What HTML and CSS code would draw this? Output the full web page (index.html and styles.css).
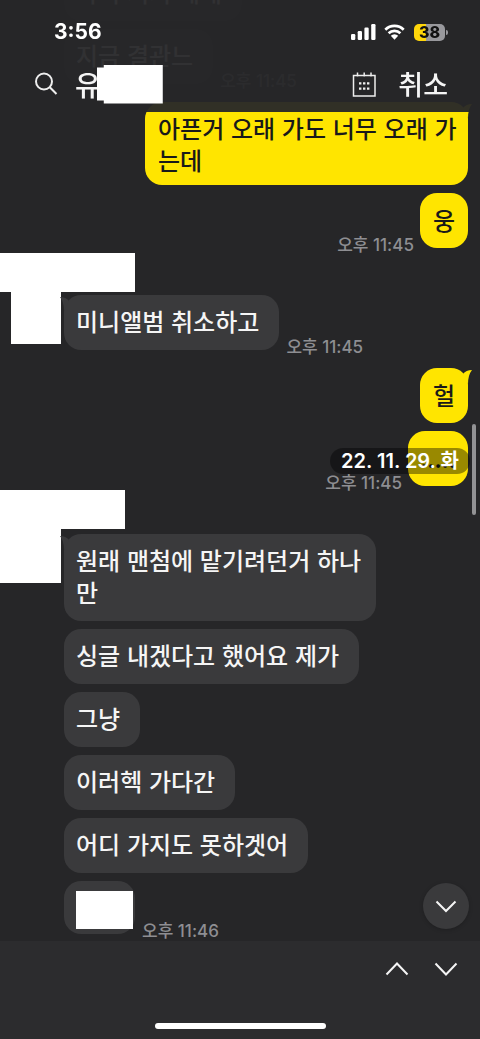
FILE: index.html
```html
<!DOCTYPE html>
<html lang="ko">
<head>
<meta charset="utf-8">
<meta name="viewport" content="width=device-width, initial-scale=1">
<title>채팅 검색</title>
<link rel="stylesheet" href="styles.css">
</head>
<body>
<header class="top">
  <div class="status">
    <span class="clock">3:56</span>
    <div class="status-icons">
      <svg class="signal" viewBox="0 0 25 16" aria-hidden="true"><rect x="0" y="10" width="4.300" height="6" rx="1.200"/><rect x="6.700" y="7" width="4.300" height="9" rx="1.200"/><rect x="13.400" y="3.500" width="4.300" height="12.500" rx="1.200"/><rect x="20.200" y="0" width="4.300" height="16" rx="1.200"/></svg>
      <svg class="wifi" viewBox="0 0 21 16" aria-hidden="true"><path d="M1.300 5.700a13.200 13.200 0 0 1 18.400 0M4.600 9.200a8.500 8.500 0 0 1 11.800 0" fill="none" stroke="#fff" stroke-width="2.700"/><path d="M6.800 11.800a5.300 5.300 0 0 1 7.400 0L10.500 15.700z"/></svg>
      <span class="battery"><span class="battery-level">38</span></span>
    </div>
  </div>
  <div class="search">
    <svg class="search-icon" viewBox="0 0 24 24" aria-hidden="true"><circle cx="10" cy="9.500" r="8"/><path d="M15.800 15.300 22.500 22"/></svg>
    <span class="query">유</span><span class="query-mask"></span>
    <button class="calendar" aria-label="날짜 선택">
      <svg viewBox="0 0 24 26" aria-hidden="true"><path d="M1.500 4.500h21.500v20.500h-21.500zM5.500 1.500v4M12.200 1.500v4M19 1.500v4" fill="none" stroke="#eee" stroke-width="1.500"/><path d="M7 11.200h2.400v2.400H7zM11 11.200h2.400v2.400H11zM15 11.200h2.400v2.400H15zM7 16.400h2.400v2.400H7zM11 16.400h2.400v2.400H11zM15 16.400h2.400v2.400H15z" fill="#eee"/></svg>
    </button>
    <button class="cancel">취소</button>
  </div>
</header>

<main class="chat">
  <div class="row in early"><p class="bubble">아니 거기 제게</p></div>
  <div class="row in"><p class="bubble">지금 결관느</p><time>오후 11:45</time></div>
  <div class="row out long"><p class="bubble tail">아픈거 오래 가도 너무 오래 가는데</p></div>
  <div class="row out"><time>오후 11:45</time><p class="bubble">웅</p></div>

  <section class="group">
    <div class="name"></div>
    <div class="avatar"></div>
    <div class="messages">
      <div class="row"><p class="bubble tail">미니앨범 취소하고</p><time>오후 11:45</time></div>
    </div>
  </section>

  <div class="row out after"><p class="bubble tail">헐</p></div>
  <div class="row out"><time>오후 11:45</time><p class="bubble dots">.....</p></div>

  <section class="group second">
    <div class="name"></div>
    <div class="avatar"></div>
    <div class="messages">
      <div class="row"><p class="bubble tail wrap">원래 맨첨에 맡기려던거 하나만</p></div>
      <div class="row"><p class="bubble">싱글 내겠다고 했어요 제가</p></div>
      <div class="row"><p class="bubble">그냥</p></div>
      <div class="row"><p class="bubble">이러헥 가다간</p></div>
      <div class="row"><p class="bubble">어디 가지도 못하겟어</p></div>
      <div class="row"><p class="bubble masked"><span class="mask"></span></p><time>오후 11:46</time></div>
    </div>
  </section>

  <span class="date">22. 11. 29. 화</span>
  <span class="scrollbar"></span>
  <button class="to-bottom" aria-label="맨 아래로"><svg viewBox="0 0 24 14" aria-hidden="true"><path d="M2.500 2.500 12 12 21.500 2.500"/></svg></button>
</main>

<footer class="bottom">
  <nav class="steps">
    <button aria-label="이전 결과"><svg viewBox="0 0 24 14" aria-hidden="true"><path d="M1.500 12.500 12 1.500 22.500 12.500"/></svg></button>
    <button aria-label="다음 결과"><svg viewBox="0 0 24 14" aria-hidden="true"><path d="M1.500 1.500 12 12.500 22.500 1.500"/></svg></button>
  </nav>
  <div class="home"></div>
</footer>
</body>
</html>
```
FILE: styles.css
```css
* { box-sizing: border-box; }
body {
  margin: 0;
  min-height: 100vh;
  display: flex;
  flex-direction: column;
  background: #262628;
  color: #f5f5f5;
  font-family: Inter, "Noto Sans CJK KR", sans-serif;
  overflow-x: hidden;
}
button {
  padding: 0;
  border: 0;
  background: none;
  color: inherit;
  font: inherit;
  display: flex;
  align-items: center;
  justify-content: center;
}
p { margin: 0; }

/* Header over the message list */
.top {
  position: fixed;
  z-index: 2;
  top: 0;
  left: 0;
  right: 0;
  height: 112px;
  background: rgba(38, 38, 40, 0.95);
}
.status {
  display: flex;
  justify-content: space-between;
  align-items: center;
  padding: 20px 35px 0 54px;
  height: 44px;
}
.clock { font-size: 21px; line-height: 24px; font-weight: 700; color: #fff; }
.status-icons { display: flex; align-items: center; gap: 8px; fill: #fff; }
.signal { width: 25px; height: 16px; }
.wifi { width: 21px; height: 16px; }
.battery {
  position: relative;
  width: 31px;
  height: 17px;
  margin-left: 1px;
  border-radius: 5px;
  background: linear-gradient(90deg, #ffd60a 38%, #98989c 38%);
  display: flex;
  align-items: center;
  justify-content: center;
}
.battery::after {
  content: "";
  position: absolute;
  right: -3px;
  top: 6px;
  width: 2px;
  height: 5px;
  border-radius: 0 2px 2px 0;
  background: #98989c;
}
.battery-level { font-size: 16px; line-height: 17px; font-weight: 800; color: #111; }
.search {
  display: flex;
  align-items: center;
  height: 80px;
  padding: 0 32px 0 34px;
  font-family: "Noto Sans CJK KR", sans-serif;
  font-weight: 500;
}
.search-icon { width: 24px; height: 24px; fill: none; stroke: #eee; stroke-width: 2; }
.query { margin-left: 17px; font-size: 28px; line-height: 36px; }
.query-mask {
  width: 66px;
  height: 39px;
  margin-left: -4px;
  background: #fff;
  clip-path: polygon(0 3px, 7px 3px, 7px 0, 100% 0, 100% 100%, 7px 100%, 7px 36px, 0 36px);
}
.calendar { width: 24px; height: 26px; margin-left: auto; }
.calendar svg { width: 24px; height: 26px; }
.cancel { margin-left: 22px; font-size: 27px; line-height: 36px; }

/* Messages */
.chat {
  position: relative;
  flex: 1;
  display: flex;
  flex-direction: column;
  gap: 8px;
  padding: 0 12px 5px 0;
}
.row { display: flex; align-items: flex-end; gap: 7px; }
.in { padding-left: 64px; }
.early { margin-top: -34px; }
.out { justify-content: flex-end; gap: 6px; }
.bubble {
  position: relative;
  min-height: 55px;
  padding: 10px 20px 13px 12px;
  border-radius: 17px;
  background: #3a3a3c;
  font: 500 24px/32px "Noto Sans CJK KR", sans-serif;
  word-break: break-all;
}
.wrap { max-width: 312px; padding-right: 12px; }
.out .bubble { padding: 11px 13px 12px; background: #ffe500; color: #19191a; }
.out .dots { width: 60px; padding: 11px 12px 12px; text-align: center; }
.long { margin-top: 10px; }
.out.long .bubble { max-width: 323px; padding: 10px 10px 9px 13px; }
.tail::before {
  content: "";
  position: absolute;
  top: 2px;
  left: -4px;
  width: 14px;
  height: 14px;
  background: inherit;
  clip-path: path("M0 0Q6 0 9 4L4 14Q4 5 0 0Z");
}
.out .tail::before { left: auto; right: -4px; clip-path: path("M14 0Q8 0 5 4L10 14Q10 5 14 0Z"); }
time {
  margin-bottom: -7px;
  font-size: 17px;
  line-height: 20px;
  font-weight: 500;
  color: #8e8e92;
  white-space: nowrap;
}
.group {
  display: grid;
  grid-template-columns: 61px 1fr;
  column-gap: 3px;
  margin-top: -3px;
}
.name { grid-column: 1 / -1; width: 135px; height: 39px; background: #fff; }
.avatar { width: 50px; height: 52px; margin-left: 11px; background: #fff; }
.messages { display: flex; flex-direction: column; gap: 8px; padding-top: 3px; }
.after { margin-top: 10px; }
.second { margin-top: -4px; }
.second .name { width: 125px; }
.second .avatar { width: 61px; height: 54px; margin-left: 0; }
.second .messages { padding-top: 5px; }
.masked { width: 71px; height: 53px; min-height: 0; padding: 10px 2px 5px 12px; }
.mask { display: block; width: 57px; height: 38px; background: #fff; }

/* Floating layers of the list */
.date {
  position: absolute;
  top: 448px;
  right: 10px;
  padding: 0 11px;
  border-radius: 13px;
  background: rgba(0, 0, 0, 0.4);
  color: #fff;
  font-size: 20px;
  line-height: 26px;
  font-weight: 600;
}
.scrollbar {
  position: absolute;
  top: 424px;
  right: 4px;
  width: 4px;
  height: 91px;
  border-radius: 2px;
  background: #929294;
}
.to-bottom {
  position: absolute;
  right: 11px;
  bottom: 12px;
  width: 46px;
  height: 46px;
  border-radius: 50%;
  background: #3a3a3c;
  box-shadow: 0 1px 4px rgba(0, 0, 0, 0.2);
}
.to-bottom svg, .steps svg { width: 24px; height: 14px; fill: none; stroke: #f5f5f5; stroke-width: 2; }

.bottom {
  display: flex;
  flex-direction: column;
  align-items: center;
  justify-content: space-between;
  height: 98px;
  padding-bottom: 10px;
  background: #2c2c2e;
}
.steps { align-self: flex-end; display: flex; gap: 25px; padding: 21px 22px 0 0; }
.home { width: 171px; height: 6px; border-radius: 3px; background: #fff; }
```
